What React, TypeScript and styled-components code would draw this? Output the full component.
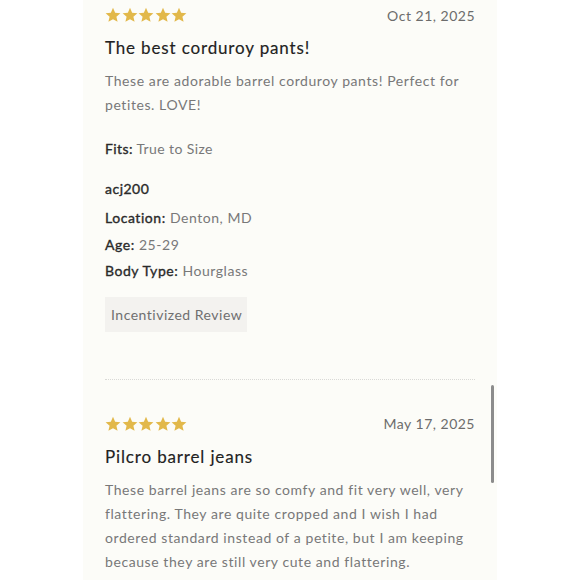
import React from "react";
import styled, { createGlobalStyle } from "styled-components";

const GlobalStyle = createGlobalStyle`
  html, body {
    margin: 0;
    padding: 0;
    background: #ffffff;
  }

  body {
    font-family: Lato, "Open Sans", sans-serif;
    -webkit-font-smoothing: antialiased;
  }
`;

const StyledPage = styled.div`
  height: 580px;
  overflow: hidden;
  padding-left: 83px;
`;

const StyledPanel = styled.div`
  background-color: #fcfcf8;
  box-sizing: border-box;
  height: 580px;
  padding: 7px 22px 0;
  position: relative;
  width: 414px;
`;

const StyledScrollThumb = styled.div`
  background-color: #8c8c8c;
  border-radius: 2px;
  height: 98px;
  position: absolute;
  right: 3px;
  top: 385px;
  width: 3px;
`;

const StyledReview = styled.article`
  display: flex;
  flex-direction: column;
`;

const StyledReviewHeader = styled.div`
  align-items: center;
  display: flex;
  height: 16px;
  justify-content: space-between;
`;

const StyledStars = styled.div`
  display: flex;
  gap: 0.5px;
`;

const StyledDate = styled.span`
  color: #6c6c6c;
  font-size: 14px;
  letter-spacing: 0.5px;
`;

const StyledTitle = styled.h3`
  color: #222222;
  font-size: 17px;
  font-weight: 400;
  letter-spacing: 0.85px;
  line-height: 24px;
  margin: 13px 0 0;
  -webkit-text-stroke: 0.15px #222222;
`;

const StyledBody = styled.p`
  color: #787878;
  font-size: 14px;
  letter-spacing: 0.58px;
  line-height: 24px;
  margin: 9px 0 0;
`;

const StyledFits = styled.div`
  color: #787878;
  font-size: 14px;
  letter-spacing: 0.4px;
  line-height: 24px;
  margin-top: 20px;
`;

const StyledLabel = styled.span`
  color: #2a2a2a;
  font-weight: 400;
  -webkit-text-stroke: 0.35px #2a2a2a;
`;

const StyledAuthor = styled.div`
  color: #2a2a2a;
  font-size: 14px;
  font-weight: 400;
  letter-spacing: 0.5px;
  line-height: 24px;
  margin-top: 16px;
  -webkit-text-stroke: 0.35px #2a2a2a;
`;

const StyledMetaList = styled.div`
  display: flex;
  flex-direction: column;
  margin-top: 4px;
`;

const StyledMetaRow = styled.div`
  color: #787878;
  font-size: 14px;
  letter-spacing: 0.55px;
  line-height: 26.5px;
`;

const StyledBadge = styled.div`
  align-self: flex-start;
  background-color: #f3f2ef;
  color: #6f6f6f;
  font-size: 14px;
  letter-spacing: 0.5px;
  line-height: 35px;
  margin-top: 12px;
  padding: 0 5px 0 6px;
`;

const StyledDivider = styled.hr`
  border: none;
  border-top: 1px dotted #d9d9d6;
  margin: 47px 0 36px;
`;

const Star = () => (
  <svg width="16" height="16" viewBox="0 0 24 24">
    <path
      d="M12 1.2l3.2 7.3 7.9.7-6 5.3 1.8 7.8L12 18.2l-6.9 4.1 1.8-7.8-6-5.3 7.9-.7z"
      fill="#e2b84a"
    />
  </svg>
);

const Stars = () => (
  <StyledStars>
    {[0, 1, 2, 3, 4].map((i) => (
      <Star key={i} />
    ))}
  </StyledStars>
);

type ReviewProps = {
  date: string;
  title: string;
  body: string;
  children?: React.ReactNode;
};

const Review = ({ date, title, body, children }: ReviewProps) => (
  <StyledReview>
    <StyledReviewHeader>
      <Stars />
      <StyledDate>{date}</StyledDate>
    </StyledReviewHeader>
    <StyledTitle>{title}</StyledTitle>
    <StyledBody>{body}</StyledBody>
    {children}
  </StyledReview>
);

export default function App() {
  return (
    <>
      <GlobalStyle />
      <StyledPage>
        <StyledPanel>
          <Review
            date="Oct 21, 2025"
            title="The best corduroy pants!"
            body="These are adorable barrel corduroy pants! Perfect for petites. LOVE!"
          >
            <StyledFits>
              <StyledLabel>Fits:</StyledLabel> True to Size
            </StyledFits>
            <StyledAuthor>acj200</StyledAuthor>
            <StyledMetaList>
              <StyledMetaRow>
                <StyledLabel>Location:</StyledLabel> Denton, MD
              </StyledMetaRow>
              <StyledMetaRow>
                <StyledLabel>Age:</StyledLabel> 25-29
              </StyledMetaRow>
              <StyledMetaRow>
                <StyledLabel>Body Type:</StyledLabel> Hourglass
              </StyledMetaRow>
            </StyledMetaList>
            <StyledBadge>Incentivized Review</StyledBadge>
          </Review>

          <StyledDivider />

          <Review
            date="May 17, 2025"
            title="Pilcro barrel jeans"
            body="These barrel jeans are so comfy and fit very well, very flattering. They are quite cropped and I wish I had ordered standard instead of a petite, but I am keeping because they are still very cute and flattering."
          />
          <StyledScrollThumb />
        </StyledPanel>
      </StyledPage>
    </>
  );
}
